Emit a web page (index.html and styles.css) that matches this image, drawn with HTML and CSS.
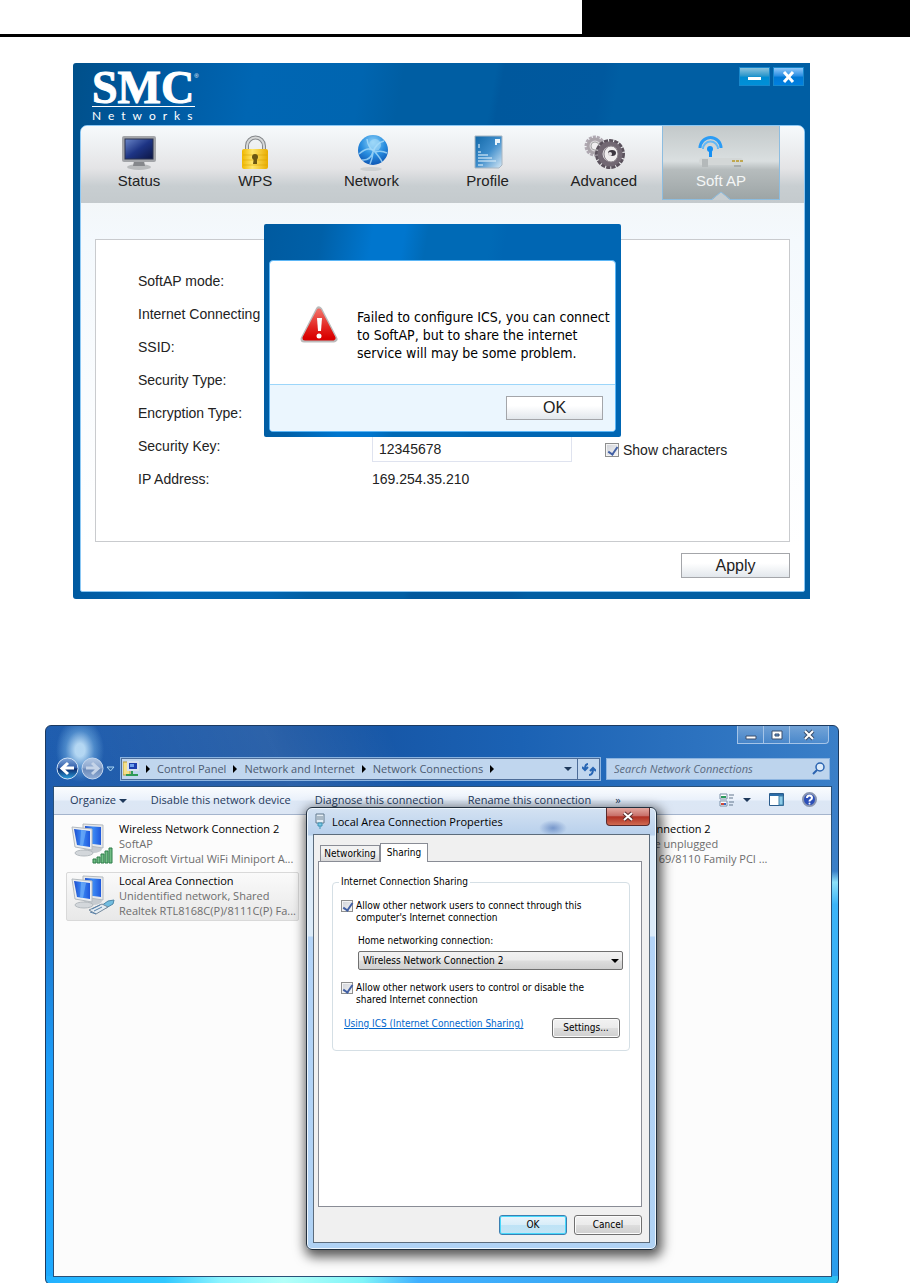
FILE: index.html
```html
<!DOCTYPE html>
<html lang="en">
<head>
    <meta charset="UTF-8">
    <meta name="viewport" content="width=device-width, initial-scale=1.0">
    <title>SMC Networks - Soft AP</title>
    <link rel="stylesheet" href="styles.css">
</head>
<body>

    <header class="page-header">
        <div class="page-header-block"></div>
    </header>

    <!-- SMC utility -->
    <section class="smc">
        <div class="smc-title">
            <div class="smc-logo">
                <div class="smc-name">SMC<sup>®</sup></div>
                <div class="smc-sub">Networks</div>
            </div>
            <div class="smc-controls">
                <button class="smc-min" aria-label="Minimize"><svg width="14" height="12" viewBox="0 0 14 12"><path d="M0 6h13v3H0z" fill="#fff"/></svg></button>
                <button class="smc-close" aria-label="Close"><svg width="14" height="12" viewBox="0 0 14 12"><path d="M2 1l9 10M11 1L2 11" stroke="#fff" stroke-width="3"/></svg></button>
            </div>
        </div>

        <div class="smc-main">
            <nav class="smc-nav">
                <button class="nav-item">
                    <svg width="36" height="36" viewBox="0 0 36 36">
                        <defs><linearGradient id="screen" x1="0" y1="0" x2="1" y2="1"><stop offset="0" stop-color="#6a86c8"/><stop offset=".5" stop-color="#1d3484"/><stop offset="1" stop-color="#0c1644"/></linearGradient></defs>
                        <ellipse cx="18" cy="32" rx="12" ry="3" fill="#b9bbbd"/>
                        <path d="M13 26h10l1 5H12z" fill="#85878b"/>
                        <rect x="1" y="1" width="34" height="26" rx="2" fill="#a3a5a9"/>
                        <rect x="4" y="4" width="28" height="20" fill="url(#screen)" stroke="#2b3350"/>
                    </svg>
                    <span>Status</span>
                </button>
                <button class="nav-item">
                    <svg width="36" height="36" viewBox="0 0 36 36">
                        <defs><linearGradient id="lock" x1="0" y1="0" x2="1" y2="0"><stop offset="0" stop-color="#f0b800"/><stop offset=".4" stop-color="#ffe66a"/><stop offset="1" stop-color="#e9ac00"/></linearGradient></defs>
                        <path d="M10 17v-6a8 8 0 0 1 17 0v6" fill="none" stroke="#85888b" stroke-width="4"/>
                        <path d="M10 17v-6a8 8 0 0 1 17 0v6" fill="none" stroke="#d6d8d8" stroke-width="2"/>
                        <rect x="5" y="14" width="26" height="20" rx="2" fill="url(#lock)"/>
                        <path d="M6 20h24M6 25h24M6 30h24" stroke="#d7a100" stroke-width="1" opacity=".5"/>
                        <circle cx="18" cy="22" r="3" fill="#6b5712"/><path d="M17 22h3v7h-4z" fill="#6b5712"/>
                    </svg>
                    <span>WPS</span>
                </button>
                <button class="nav-item">
                    <svg width="36" height="36" viewBox="0 0 36 36">
                        <defs><radialGradient id="globe" cx=".5" cy=".25" r=".8"><stop offset="0" stop-color="#8fd2f8"/><stop offset=".5" stop-color="#2a8fe0"/><stop offset="1" stop-color="#0a50b0"/></radialGradient></defs>
                        <ellipse cx="18" cy="34" rx="11" ry="2" fill="#cdd0d2"/>
                        <circle cx="20" cy="15" r="15" fill="url(#globe)"/>
                        <path d="M6 19q10-9 16-2t7 10M9 25q8 1 11-8t11-11M20 16q-5-4-6-12M22 17q6-2 12 1M20 18q-1 7-3 11" fill="none" stroke="#a8dcfa" stroke-width="1.5" opacity=".8"/>
                        <circle cx="22" cy="10" r="6" fill="#a9dcf8" opacity=".6"/>
                    </svg>
                    <span>Network</span>
                </button>
                <button class="nav-item">
                    <svg width="36" height="36" viewBox="0 0 36 36">
                        <defs><linearGradient id="doc" x1="0" y1="0" x2="1" y2="1"><stop offset="0" stop-color="#1268a8"/><stop offset=".5" stop-color="#3e8dcb"/><stop offset="1" stop-color="#d5e8f6"/></linearGradient></defs>
                        <path d="M5 1h27v29l-3 3H5z" fill="url(#doc)" stroke="#a8b6c2"/>
                        <path d="M25 4h5v4h-3v2h-2z" fill="#e8f4fb"/>
                        <path d="M9 9v4M8 17h3M8 20h10M8 23h14M8 26h18M8 30h5" stroke="#d5eaf8" stroke-width="2" opacity=".6"/>
                    </svg>
                    <span>Profile</span>
                </button>
                <button class="nav-item">
                    <svg width="42" height="36" viewBox="0 0 42 36">
                        <circle cx="12" cy="11" r="9" fill="none" stroke="#b0a9b2" stroke-width="3" stroke-dasharray="3 1"/>
                        <circle cx="12" cy="11" r="7" fill="#d8d4d8" stroke="#aaa4aa" stroke-width="3"/>
                        <circle cx="12" cy="11" r="4" fill="#f0eef0" stroke="#aaa"/>
                        <circle cx="27" cy="19" r="13" fill="none" stroke="#5b525d" stroke-width="4" stroke-dasharray="4 1"/>
                        <circle cx="27" cy="19" r="10" fill="#ddd9dc" stroke="#726873" stroke-width="5"/>
                        <ellipse cx="28" cy="19" rx="7" ry="8" fill="#efedee" stroke="#8a828a"/>
                        <ellipse cx="29" cy="18" rx="4" ry="3" fill="#3d3740"/><circle cx="27" cy="19" r="2" fill="#e4e1e3"/>
                    </svg>
                    <span>Advanced</span>
                </button>
                <button class="nav-item active">
                    <svg width="46" height="36" viewBox="0 0 46 36">
                        <path d="M2 13a10 10 0 0 1 21 0" fill="none" stroke="#2b9cf5" stroke-width="3"/>
                        <path d="M5 14a7 7 0 0 1 15 0" fill="none" stroke="#63b8f6" stroke-width="2"/>
                        <circle cx="12" cy="14" r="3" fill="#1590f4"/><path d="M11 14h3v8h-3z" fill="#1590f4"/>
                        <rect x="1" y="23" width="44" height="7" rx="3" fill="#d3d7d7"/>
                        <rect x="4" y="24" width="6" height="8" fill="#b4b9ba"/>
                        <path d="M34 26h11" stroke="#c0a850" stroke-width="2" stroke-dasharray="3 1"/><path d="M36 31h7" stroke="#a8adae" stroke-width="2"/>
                    </svg>
                    <span>Soft AP</span>
                    <svg class="nav-notch" width="18" height="9" viewBox="0 0 18 9"><path d="M0 9L9 1L18 9z" fill="#c8ced1"/><path d="M0 8L9 1L18 8" fill="none" stroke="#8dbde0"/></svg>
                </button>
            </nav>

            <div class="smc-body">
                <div class="panel">
                    <div class="row"><span>SoftAP mode:</span></div>
                    <div class="row"><span>Internet Connecting</span></div>
                    <div class="row"><span>SSID:</span></div>
                    <div class="row"><span>Security Type:</span></div>
                    <div class="row"><span>Encryption Type:</span></div>
                    <div class="row">
                        <label for="securityKey">Security Key:</label>
                        <input class="key-input" type="text" id="securityKey" value="12345678">
                        <div class="show-chars">
                            <input class="tick" type="checkbox" id="showChars" checked>
                            <label for="showChars">Show characters</label>
                        </div>
                    </div>
                    <div class="row"><span>IP Address:</span><span>169.254.35.210</span></div>
                </div>
                <div class="smc-actions">
                    <button class="smc-button apply">Apply</button>
                </div>
            </div>
        </div>

        <!-- ICS error message -->
        <div class="message" role="alertdialog">
            <div class="message-inner">
                <div class="message-body">
                    <svg width="38" height="38" viewBox="0 0 38 38">
                        <defs><linearGradient id="warn" x1="0" y1="0" x2="0" y2="1"><stop offset="0" stop-color="#f06a62"/><stop offset=".6" stop-color="#e2241f"/><stop offset="1" stop-color="#d90000"/></linearGradient></defs>
                        <path d="M19 4L34 33H4z" fill="#bbb" stroke="#bbb" stroke-width="7" stroke-linejoin="round"/>
                        <path d="M19 5L33 32H5z" fill="url(#warn)" stroke="url(#warn)" stroke-width="5" stroke-linejoin="round"/>
                        <path d="M17 12h5l-1 13h-3z" fill="#fff"/><circle cx="19" cy="30" r="2.500" fill="#fff"/>
                    </svg>
                    <p>Failed to configure ICS, you can connect<br>to SoftAP, but to share the internet<br>service will may be some problem.</p>
                </div>
                <div class="message-footer">
                    <button class="smc-button">OK</button>
                </div>
            </div>
        </div>
    </section>

    <!-- Network Connections window -->
    <section class="explorer">
        <div class="win-controls">
            <button aria-label="Minimize"><svg width="14" height="12" viewBox="0 0 14 12"><path d="M2 7h10v3H2z" fill="#fff" stroke="#3c4f6c"/></svg></button>
            <button aria-label="Maximize"><svg width="14" height="12" viewBox="0 0 14 12"><path d="M2 2h10v8H2zM5 5v2h4V5z" fill="#fff" fill-rule="evenodd" stroke="#3c4f6c"/></svg></button>
            <button aria-label="Close"><svg width="14" height="12" viewBox="0 0 14 12"><path d="M3 2l8 8M11 2l-8 8" stroke="#3c4f6c" stroke-width="4"/><path d="M3 2l8 8M11 2l-8 8" stroke="#fff" stroke-width="2"/></svg></button>
        </div>

        <div class="address-row">
            <div class="history">
                <button aria-label="Back"><svg width="23" height="23" viewBox="0 0 23 23">
                    <defs><linearGradient id="back" x1="0" y1="0" x2="0" y2="1"><stop offset="0" stop-color="#7fa6da"/><stop offset=".48" stop-color="#2f5ca8"/><stop offset=".52" stop-color="#0a2a6c"/><stop offset="1" stop-color="#2ba0e0"/></linearGradient></defs>
                    <circle cx="11.500" cy="11.500" r="10.500" fill="url(#back)" stroke="#d0e2f6"/>
                    <path d="M18 11H7M12 6l-6 5.500 6 5.500" fill="none" stroke="#fff" stroke-width="3"/></svg></button>
                <button aria-label="Forward"><svg width="23" height="23" viewBox="0 0 23 23">
                    <defs><linearGradient id="fwd" x1="0" y1="0" x2="0" y2="1"><stop offset="0" stop-color="#b3c8e4"/><stop offset=".48" stop-color="#8aa5cd"/><stop offset=".52" stop-color="#6a89b8"/><stop offset="1" stop-color="#92aed6"/></linearGradient></defs>
                    <circle cx="11.500" cy="11.500" r="10.500" fill="url(#fwd)" stroke="#c5d8f0"/>
                    <path d="M5 11h11M11 6l6 5.500-6 5.500" fill="none" stroke="#c5d4e8" stroke-width="3"/></svg></button>
                <svg width="9" height="6" viewBox="0 0 9 6"><path d="M1 1h7L4.500 5z" fill="#2c66a8" stroke="#a8d4f4"/></svg>
            </div>
            <div class="address">
                <svg width="16" height="18" viewBox="1 0 16 18">
                    <path d="M1 2h6l1 2v11H1z" fill="#f4e08a" stroke="#b69b3c"/>
                    <rect x="6" y="2" width="10" height="8" fill="#1d3fae" stroke="#d5dfee" stroke-width="2"/>
                    <path d="M8 4h4v3H8z" fill="#6ea0ee"/><path d="M10 11v4M4 15h12" stroke="#2f9a58" stroke-width="2"/>
                </svg>
                <i class="crumb-arrow"></i><a href="#">Control Panel</a>
                <i class="crumb-arrow"></i><a href="#">Network and Internet</a>
                <i class="crumb-arrow"></i><a href="#">Network Connections</a>
                <i class="crumb-arrow"></i>
                <i class="down-arrow address-drop"></i>
                <button class="refresh" aria-label="Refresh"><svg width="14" height="14" viewBox="0 0 14 14"><path d="M6 2Q3 2 3 7M0 5l3 3 3-3" fill="none" stroke="#2866b4" stroke-width="2"/><path d="M7 13q4 0 4-6M8 9l3-3 3 3" fill="none" stroke="#2866b4" stroke-width="2"/></svg></button>
            </div>
            <div class="search">
                <input type="text" placeholder="Search Network Connections" aria-label="Search Network Connections">
                <svg width="13" height="13" viewBox="0 0 13 13"><circle cx="8" cy="5" r="4" fill="#dcebfa" stroke="#2a63b0" stroke-width="1.500"/><path d="M5 8l-4 4" stroke="#2a63b0" stroke-width="2"/></svg>
            </div>
        </div>

        <div class="explorer-body">
            <div class="toolbar">
                <button>Organize <i class="down-arrow"></i></button>
                <button>Disable this network device</button>
                <button>Diagnose this connection</button>
                <button>Rename this connection</button>
                <button>»</button>
                <div class="toolbar-right">
                    <button aria-label="Change your view"><svg width="15" height="14" viewBox="0 0 15 14"><path d="M1 1h7v5H1zM1 8h7v5H1z" fill="#fff" stroke="#7a90a8"/><path d="M2 4h5" stroke="#2a9a5c" stroke-width="2"/><path d="M2 11h3" stroke="#d04a3a" stroke-width="2"/><path d="M5 11h2" stroke="#3868c8" stroke-width="2"/><path d="M10 2h5M10 5h4M10 9h5M10 12h4" stroke="#64788e"/></svg><i class="down-arrow"></i></button>
                    <button aria-label="Show the preview pane"><svg width="15" height="13" viewBox="0 0 15 13"><path d="M.5.500h14v12H.5z" fill="#fff" stroke="#2b5c8c"/><path d="M1 2h13" stroke="#2b6ca8" stroke-width="2"/><path d="M10 3h4v9h-4z" fill="#8ccbe8" stroke="#4080a8"/></svg></button>
                    <button aria-label="Get help"><svg width="15" height="15" viewBox="0 0 15 15"><circle cx="7.500" cy="7.500" r="6.500" fill="#2c4fb8" stroke="#8894b0" stroke-width="2"/><path d="M5 6q0-2.500 2.500-2.500T10 6q0 1-1.500 1.800-1 .5-1 1.700" fill="none" stroke="#fff" stroke-width="2"/><circle cx="7.500" cy="11.500" r="1" fill="#fff"/></svg></button>
                </div>
            </div>

            <div class="connections">
                <div class="tile">
                    <svg width="46" height="44" viewBox="0 0 46 44">
                        <defs><linearGradient id="mon" x1="0" y1="0" x2="1" y2="0"><stop offset="0" stop-color="#1d4fd0"/><stop offset=".5" stop-color="#3c8af4"/><stop offset="1" stop-color="#1f58dc"/></linearGradient></defs>
                        <g id="monitors">
                            <ellipse cx="24" cy="26" rx="9" ry="4" fill="#c6cbd0"/>
                            <path d="M14 1l20 1v23l-20-3z" fill="#e6e8ea" stroke="#b4babf"/><path d="M16 3l16 1v18l-16-2z" fill="url(#mon)"/>
                            <ellipse cx="15" cy="30" rx="9" ry="3" fill="#d3d7db" stroke="#b4babf"/>
                            <path d="M3 4l20 2v21l-17-3z" fill="#eceef0" stroke="#b4babf"/><path d="M5 6l16 2v16l-13-2z" fill="url(#mon)"/><path d="M12 7l5 1-3 15-3-1z" fill="#7cb8fa" opacity=".6"/>
                        </g>
                        <path d="M24 36h3v4h-3zM28 34h3v6h-3zM32 31h3v9h-3zM36 28h3v12h-3zM40 25h3v15h-3z" fill="#72bd86" stroke="#2d7d48"/>
                    </svg>
                    <div><h3>Wireless Network Connection 2</h3><p>SoftAP</p><p>Microsoft Virtual WiFi Miniport A...</p></div>
                </div>
                <div class="tile selected">
                    <svg width="46" height="44" viewBox="0 0 46 44">
                        <use href="#monitors"/>
                        <path d="M32 31l7-5 6-1-1 4-7 4z" fill="#72bde0" stroke="#4d87a8"/>
                        <path d="M20 35l13-6 6 3-12 7z" fill="#e4ecf2" stroke="#74899c"/><path d="M25 36l8-4M23 34l8-4M21 37l6 2" stroke="#5882ac"/>
                    </svg>
                    <div><h3>Local Area Connection</h3><p>Unidentified network, Shared</p><p>Realtek RTL8168C(P)/8111C(P) Fa...</p></div>
                </div>
                <div class="tile third">
                    <svg width="46" height="44" viewBox="0 0 46 44"><use href="#monitors"/></svg>
                    <div><h3>Local Area Connection 2</h3><p>Network cable unplugged</p><p>Realtek RTL8169/8110 Family PCI ...</p></div>
                </div>
            </div>
        </div>

        <!-- Properties dialog -->
        <div class="props" role="dialog" aria-labelledby="propsTitle">
            <div class="props-title">
                <svg width="10" height="16" viewBox="0 0 10 16"><path d="M1 1h8v9H1z" fill="#e4edf4" stroke="#60788c"/><path d="M3 3v4M5 3v4M7 3v4" stroke="#718699"/><path d="M3 10h4v3H3zM5 13v3" fill="#7ccbe8" stroke="#3f93b4"/></svg>
                <span id="propsTitle">Local Area Connection Properties</span>
                <button class="props-close" aria-label="Close"><svg width="14" height="12" viewBox="0 0 14 12"><path d="M3 2l8 7M11 2l-8 7" stroke="#5c2c2c" stroke-width="4"/><path d="M3 2l8 7M11 2l-8 7" stroke="#fff" stroke-width="2"/></svg></button>
            </div>
            <div class="props-body">
                <div class="tabs">
                    <button class="tab">Networking</button>
                    <button class="tab tab-active">Sharing</button>
                </div>
                <div class="tab-page">
                    <fieldset class="group">
                        <legend>Internet Connection Sharing</legend>
                        <div class="check">
                            <input class="tick" type="checkbox" id="allowConnect" checked>
                            <label for="allowConnect">Allow other network users to connect through this<br>computer's Internet connection</label>
                        </div>
                        <div class="home">
                            <label for="homeConn">Home networking connection:</label>
                            <div class="select-wrap">
                                <select id="homeConn"><option>Wireless Network Connection 2</option></select>
                            </div>
                        </div>
                        <div class="check">
                            <input class="tick" type="checkbox" id="allowControl" checked>
                            <label for="allowControl">Allow other network users to control or disable the<br>shared Internet connection</label>
                        </div>
                        <div class="group-foot">
                            <a href="#">Using ICS (Internet Connection Sharing)</a>
                            <button class="win-button">Settings...</button>
                        </div>
                    </fieldset>
                </div>
                <div class="props-actions">
                    <button class="win-button default">OK</button>
                    <button class="win-button">Cancel</button>
                </div>
            </div>
        </div>
    </section>

</body>
</html>
```
FILE: styles.css
```css
* {
    box-sizing: border-box;
}

body {
    margin: 0;
    background: #fff;
    font-family: "Liberation Sans", Arial, sans-serif;
    font-size: 14px;
    color: #222;
}

button {
    margin: 0;
    padding: 0;
    border: none;
    background: none;
    font: inherit;
    color: inherit;
}

svg {
    display: block;
    flex: none;
}

h3, p {
    margin: 0;
    font-size: inherit;
    font-weight: normal;
}

.page-header {
    display: flex;
    justify-content: flex-end;
    height: 37px;
    border-bottom: 3px solid #000;
}

.page-header-block {
    width: 36%;
    background: #000;
}

/* SMC utility */
.smc {
    position: relative;
    margin: 26px 100px 0 73px;
    padding: 0 5px 7px 7px;
    border-radius: 3px 0 0 3px;
    background: linear-gradient(100deg, #00508a 0, #00569b 8%, #0066b3 22%, #0065b0 35%, #005ea3 40%, #005ea3 51%, #00589d 52%, #00599f 64%, #005ea3 66%);
}

.smc-title {
    display: flex;
    justify-content: space-between;
    height: 62px;
    padding-left: 12px;
}

.smc-logo {
    padding-top: 4px;
    color: #fff;
}

.smc-name {
    height: 39px;
    font: bold 46px/42px "Liberation Serif", serif;
    -webkit-text-stroke: 1px #fff;
    white-space: nowrap;
}

.smc-name sup {
    font: 6px/6px "Liberation Sans", sans-serif;
    -webkit-text-stroke: 0;
    vertical-align: 25px;
}

.smc-sub {
    width: 103px;
    border-top: 1px solid #fff;
    font: 12px/18px Lato, sans-serif;
    letter-spacing: 7px;
    white-space: nowrap;
}

.smc-controls {
    display: flex;
    gap: 3px;
    padding: 4px 1px 0 0;
}

.smc-controls button {
    display: flex;
    align-items: center;
    justify-content: center;
    width: 31px;
    height: 19px;
    border: 1px solid #1888cc;
}

.smc-controls .smc-min {
    background: linear-gradient(#8cc4de, #2d98cc 45%, #008cd2 55%, #0090d8);
}

.smc-controls .smc-close {
    background: linear-gradient(#90c8fa, #2c90e4 45%, #0078d4 55%, #0080e0);
}

.smc-main {
    border: 1px solid #8cc8f4;
    border-radius: 7px 7px 2px 2px;
    background: linear-gradient(#f3f7f9 77px, #f4f9fd 115px, #fff 420px);
    overflow: hidden;
}

.smc-nav {
    display: flex;
    height: 77px;
    padding-right: 24px;
    background: linear-gradient(#f6fafc, #e4e4e6 55%, #c8ced1 78%, #c4cacd);
}

.nav-item {
    position: relative;
    display: flex;
    flex: 1;
    flex-direction: column;
    align-items: center;
    height: 74px;
    padding-top: 9px;
    font-size: 15px;
    line-height: 19px;
    color: #222;
}

.nav-item.active {
    border: 1px solid #8dbde0;
    border-top: none;
    background: linear-gradient(#c3c9ca, #dadfe0 48%, #b6bcbd 60%, #9da5a6);
    color: #f4f6f6;
}

/* sits on the lower edge of the active item */
.nav-notch {
    position: absolute;
    bottom: -1px;
    left: 50%;
    margin-left: -9px;
}

.smc-body {
    padding: 36px 14px 13px;
}

.panel {
    padding: 24px 42px 46px;
    border: 1px solid #c9cbce;
    background: #fff;
}

.row {
    display: grid;
    grid-template-columns: 234px 200px 1fr;
    align-items: center;
    height: 33px;
}

.key-input {
    align-self: end;
    height: 26px;
    padding: 0 6px;
    border: 1px solid #dfe3ef;
    font: inherit;
    color: inherit;
}

.show-chars {
    display: flex;
    align-items: center;
    align-self: end;
    gap: 4px;
    padding: 0 0 4px 33px;
}

.tick {
    appearance: none;
    position: relative;
    flex: none;
    width: 14px;
    height: 14px;
    margin: 0;
    border: 1px solid #8e8f8f;
    background: linear-gradient(135deg, #cfd2d8, #f6f6f6);
    box-shadow: inset 0 0 0 1px #f4f4f4;
}

.tick:checked::before {
    content: "";
    position: absolute;
    left: 4px;
    top: 1px;
    width: 4px;
    height: 8px;
    border: solid #4260a4;
    border-width: 0 2px 2px 0;
    transform: rotate(35deg);
}

.smc-actions {
    display: flex;
    justify-content: flex-end;
    padding-top: 11px;
}

.smc-button {
    width: 97px;
    height: 24px;
    border: 1px solid #a4a6aa;
    background: linear-gradient(#fff 40%, #e2e7ec);
    font-size: 16px;
}

.apply {
    width: 109px;
    height: 25px;
}

/* error message over the form */
.message {
    position: absolute;
    top: 161px;
    left: 191px;
    width: 357px;
    padding: 36px 5px 5px;
    border-radius: 2px;
    background: linear-gradient(100deg, #005a9f, #0060a8 15%, #0076ce 28%, #0076ce 36%, #006ab6 42%, #006ab6 58%, #0066b3 62%);
}

.message-inner {
    border: 1px solid #5cb6f6;
    border-radius: 4px;
    background: #fff;
    overflow: hidden;
}

.message-body {
    display: flex;
    gap: 19px;
    height: 123px;
    padding: 45px 0 0 30px;
    font: 14px/18px "DejaVu Sans Condensed", Tahoma, sans-serif;
    white-space: nowrap;
    color: #000;
}

.message-body p {
    padding-top: 2px;
}

.message-footer {
    display: flex;
    justify-content: flex-end;
    padding: 11px 12px;
    border-top: 1px solid #9cd6fa;
    background: #ebf6fe;
}

/* Network Connections window */
.explorer {
    position: relative;
    margin: 126px 71px 0 45px;
    padding: 0 6px 7px 7px;
    border: 1px solid #1c3a60;
    border-radius: 6px;
    background:
        linear-gradient(90deg, #22b0ff, #30c8ff 15%, #8cf4ff 22%, #b4fff8 30%, #80f4f8 40%, #40b0ff 47%, #3aa8f4 70%, #2ec0f0) 0 100% / 100% 8px no-repeat,
        radial-gradient(ellipse 24px 32px at 34px 24px, rgba(196, 228, 250, .9) 20%, rgba(120, 180, 230, .5) 60%, transparent) no-repeat,
        linear-gradient(65deg, transparent 0, rgba(255, 255, 255, .1) 30%, transparent 45%) 0 0 / 100% 60px no-repeat,
        linear-gradient(180deg, transparent 20%, #1c9cf8 60%, #1eaaff) 0 0 / 8px 100% no-repeat,
        linear-gradient(180deg, transparent 26%, #8ce0fa 28%, #3cb4f8 32%, #2a9cec) 100% 0 / 8px 100% no-repeat,
        linear-gradient(90deg, #1d5cae, #14509f 30%, #1b62b4 60%, #3a7fc8);
    font: 11px/15px "Open Sans", "Segoe UI", sans-serif;
}

.win-controls {
    display: flex;
    justify-content: flex-end;
    height: 31px;
    padding-right: 3px;
}

.win-controls button {
    display: flex;
    align-items: center;
    justify-content: center;
    width: 26px;
    height: 18px;
    border: 1px solid #a4c4e8;
    border-width: 0 0 1px 1px;
    background: linear-gradient(rgba(255, 255, 255, .3), rgba(255, 255, 255, .1));
}

.win-controls button:last-child {
    width: 40px;
    border-right-width: 1px;
    border-radius: 0 0 4px 0;
}

.address-row {
    display: flex;
    gap: 6px;
    align-items: center;
    height: 29px;
    padding: 0 2px 6px 3px;
    color: #4c5a70;
}

.history {
    display: flex;
    gap: 2px;
    align-items: center;
}

.address {
    display: flex;
    flex: 1;
    align-items: center;
    height: 22px;
    padding-left: 1px;
    border: 1px solid #4c6c98;
    outline: 1px solid #8cb4e0;
    background: #c0d6ee;
    white-space: nowrap;
}

.address a {
    color: inherit;
    text-decoration: none;
}

.crumb-arrow {
    margin: 0 7px;
    border: 4px solid transparent;
    border-left-color: #000;
    border-right: none;
}

.down-arrow {
    display: inline-block;
    border: 4px solid transparent;
    border-top-color: #1e395b;
    border-bottom: none;
    vertical-align: 1px;
}

.address-drop {
    margin: 0 5px 0 auto;
}

.refresh {
    display: flex;
    align-items: center;
    justify-content: center;
    width: 22px;
    height: 20px;
    border-left: 1px solid #4c6c98;
}

.search {
    display: flex;
    align-items: center;
    width: 224px;
    height: 22px;
    padding: 0 4px 0 7px;
    border: 1px solid #8cb4e0;
    background: #bdd4ed;
}

.search input {
    flex: 1;
    min-width: 0;
    padding: 0;
    border: none;
    background: none;
    font: inherit;
    font-style: italic;
}

.search input::placeholder {
    color: #5a6a80;
}

.explorer-body {
    border: 1px solid #2a5078;
    background: #fcfcfc;
}

.toolbar {
    display: flex;
    gap: 24px;
    align-items: center;
    height: 28px;
    padding: 0 14px 2px 16px;
    border-bottom: 1px solid #a4b4cc;
    background: linear-gradient(#fafcfe, #eaf1fb 48%, #dce7f5 52%, #dce6f4);
    color: #1e395b;
    white-space: nowrap;
}

.toolbar-right {
    display: flex;
    gap: 18px;
    align-items: center;
    margin-left: auto;
}

.toolbar-right button {
    display: flex;
    gap: 9px;
    align-items: center;
}

.connections {
    display: grid;
    grid-template-columns: repeat(3, 233px);
    grid-template-rows: repeat(2, 49px);
    gap: 3px 1px;
    min-height: 461px;
    padding: 5px 12px;
}

.tile {
    display: flex;
    gap: 4px;
    padding: 0 2px;
    border: 1px solid transparent;
    border-radius: 2px;
    color: #6d6d6d;
    white-space: nowrap;
}

.tile svg {
    margin-top: 2px;
}

.tile h3 {
    color: #000;
}

.tile.selected {
    border-color: #d9d9d9;
    background: linear-gradient(#fafafa, #e8e8e8);
    grid-row: 2;
}

.tile.third {
    grid-column: 3;
    grid-row: 1;
}

/* properties dialog over the window */
.props {
    position: absolute;
    top: 81px;
    left: 260px;
    width: 351px;
    padding: 0 6px 6px;
    border: 1px solid #22303e;
    border-radius: 6px;
    background: linear-gradient(#d4e2f2, #b8d0ec 27px, #dcebf9 28px, #dcebf9 128px, #b4d4f8 129px, #b0d2f4);
    box-shadow: inset 0 0 0 1px #eef6fd, 2px 4px 12px 3px rgba(0, 0, 0, .65);
    color: #000;
}

.props-title {
    display: flex;
    gap: 7px;
    align-items: center;
    height: 26px;
    padding-left: 2px;
    background: radial-gradient(ellipse 14px 8px at 240px 20px, rgba(70, 110, 180, .6), transparent) no-repeat;
}

.props-close {
    display: flex;
    align-items: center;
    justify-content: center;
    align-self: flex-start;
    width: 44px;
    height: 18px;
    margin-left: auto;
    border: 1px solid #5a2a2c;
    border-top: none;
    border-radius: 0 0 4px 4px;
    background: linear-gradient(#e4a8a0, #c8706a 45%, #b03024 52%, #d06a50);
}

.props-body {
    padding: 8px 7px 7px 4px;
    border: 1px solid #5c6c7c;
    background: #f0f0f0;
    font: 10px/12px "DejaVu Sans Condensed", Tahoma, sans-serif;
}

.tabs {
    display: flex;
    align-items: flex-end;
    height: 18px;
    padding-left: 2px;
}

.tab {
    width: 60px;
    height: 16px;
    border: 1px solid #898c95;
    border-bottom: none;
    background: linear-gradient(#f2f2f2 45%, #d8d8d8);
}

/* the chosen tab overlaps the edge of its page */
.tab-active {
    position: relative;
    width: 48px;
    height: 19px;
    margin-bottom: -1px;
    background: #fff;
}

.tab-page {
    min-height: 346px;
    padding: 14px 11px 0 13px;
    border: 1px solid #898c95;
    background: #fff;
}

.group {
    margin: 0;
    padding: 12px 8px;
    border: 1px solid #d5dfe5;
    border-radius: 4px;
}

.group legend {
    padding: 0 2px;
    margin-left: -2px;
}

.check {
    display: flex;
    gap: 3px;
    white-space: nowrap;
}

.check .tick {
    width: 12px;
    height: 12px;
}

.check .tick:checked::before {
    left: 3px;
    top: 0;
}

.home {
    padding: 11px 0 12px 17px;
}

.select-wrap {
    position: relative;
    margin: 4px -2px 0 0;
}

.select-wrap::after {
    content: "";
    position: absolute;
    right: 4px;
    top: 8px;
    border: 4px solid transparent;
    border-top-color: #000;
    border-bottom: none;
    pointer-events: none;
}

select {
    appearance: none;
    display: block;
    width: 100%;
    height: 19px;
    padding: 0 4px;
    border: 1px solid #707070;
    border-radius: 2px;
    background: linear-gradient(#f2f2f2, #ebebeb 48%, #dddddd 52%, #cfcfcf);
    font: inherit;
    color: inherit;
}

.group-foot {
    display: flex;
    justify-content: space-between;
    padding: 12px 1px 0 3px;
    white-space: nowrap;
}

.group-foot a {
    color: #0066cc;
}

.win-button {
    width: 68px;
    height: 20px;
    border: 1px solid #707070;
    border-radius: 3px;
    background: linear-gradient(#f2f2f2, #ebebeb 48%, #dddddd 52%, #cfcfcf);
    box-shadow: inset 0 0 0 1px #fcfcfc;
}

.win-button.default {
    border-color: #3c7fb1;
    background: linear-gradient(#eaf5fc, #d8edf9 48%, #bee3f6 52%, #c4e4f4);
    box-shadow: inset 0 0 0 1px #46d8fb;
}

.props-actions {
    display: flex;
    gap: 7px;
    justify-content: flex-end;
    padding-top: 8px;
}
```
